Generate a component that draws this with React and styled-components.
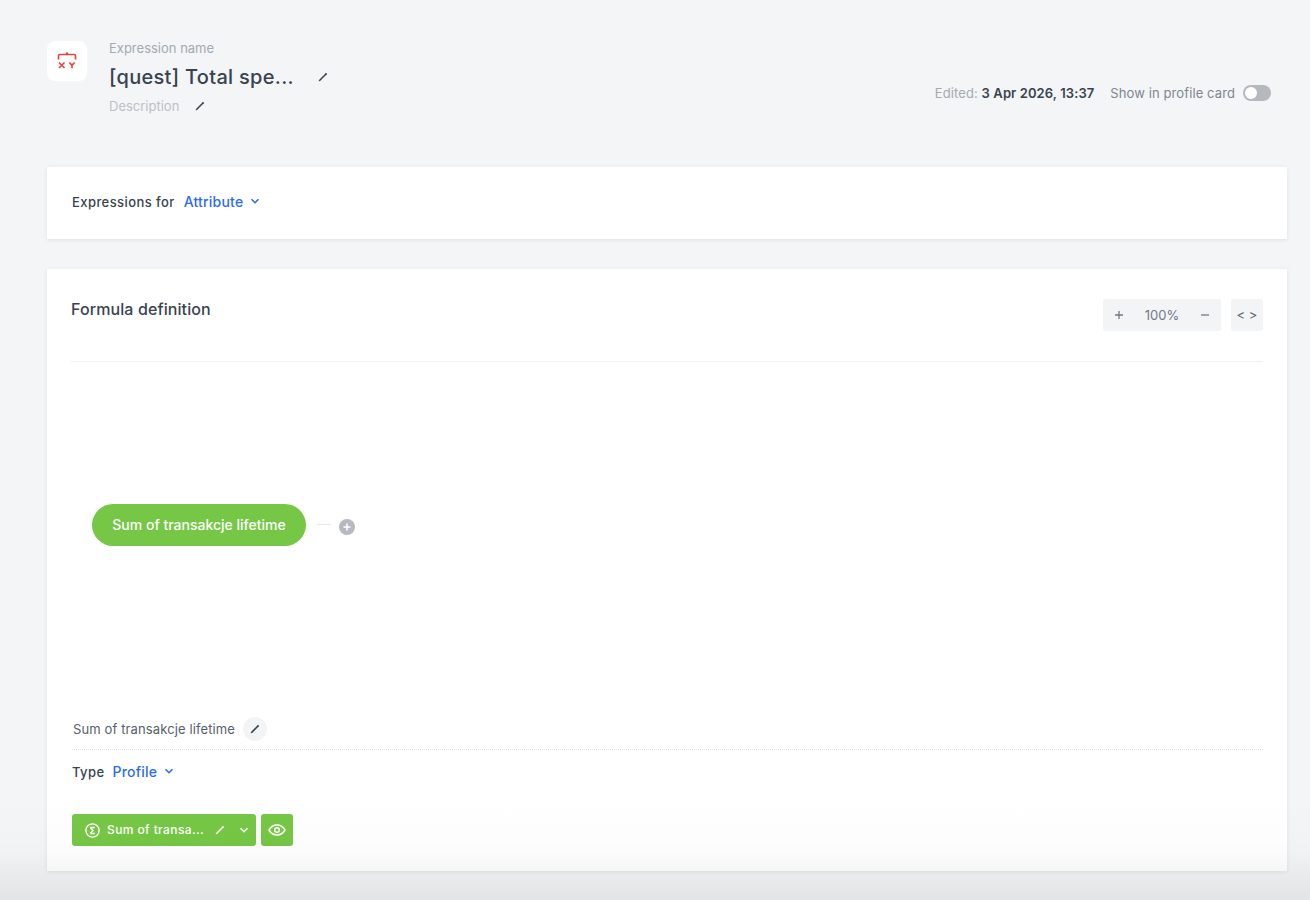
import React from 'react';
import styled, { createGlobalStyle } from 'styled-components';

const GlobalStyle = createGlobalStyle`
    html, body {
        margin: 0;
        padding: 0;
        height: 100%;
        background: #f3f5f7;
        overflow: hidden;
    }
    * {
        box-sizing: border-box;
    }
`

const Page = styled.div`
    position: relative;
    width: 1310px;
    height: 900px;
    overflow: hidden;
    padding: 41px 23px 0 47px;
    background: #f3f5f7;
    color: #384350;
    font-family: Inter, "Liberation Sans", sans-serif;
`

const BottomFade = styled.div`
    position: absolute;
    left: 0;
    right: 0;
    bottom: 0;
    height: 100px;
    pointer-events: none;
    background: linear-gradient(180deg, rgba(0,0,0,0) 0%, rgba(0,0,0,0.012) 50%, rgba(0,0,0,0.07) 100%);
`

const Header = styled.header`
    display: flex;
    justify-content: space-between;
    height: 126px;
`

const HeaderLeft = styled.div`
    display: flex;
    gap: 22px;
`

const LogoBox = styled.div`
    width: 40px;
    height: 40px;
    display: flex;
    align-items: center;
    justify-content: center;
    border-radius: 8px;
    background: #fff;
`

const NameColumn = styled.div`
    display: flex;
    flex-direction: column;
    margin-top: -1px;
`

const NameLabel = styled.div`
    font-size: 13px;
    line-height: 16px;
    color: #a3aab1;
`

const TitleRow = styled.div`
    display: flex;
    align-items: center;
    margin-top: 7px;
    height: 28px;
`

const Title = styled.div`
    width: 209px;
    font-size: 20px;
    font-weight: 500;
    line-height: 28px;
    letter-spacing: 0.3px;
    color: #384350;
`

const DescriptionRow = styled.div`
    display: flex;
    align-items: center;
    margin-top: 7px;
    height: 16px;
`

const Description = styled.div`
    width: 86px;
    font-size: 13px;
    line-height: 16px;
    color: #bcc1c6;
`

const HeaderRight = styled.div`
    display: flex;
    align-items: center;
    height: 24px;
    margin: 40px 16px 0 0;
    font-size: 13px;
    letter-spacing: 0.1px;
`

const Edited = styled.span`
    color: #a3aab1;
    margin-right: 16px;
    b {
        font-weight: 600;
        color: #384350;
    }
`

const ToggleLabel = styled.span`
    color: #7d8790;
    margin-right: 8px;
`

const Toggle = styled.div`
    width: 28px;
    height: 16px;
    padding: 2px;
    border-radius: 8px;
    background: #b5b9bd;
`

const ToggleKnob = styled.div`
    width: 12px;
    height: 12px;
    border-radius: 50%;
    background: #fff;
`

const Card = styled.section`
    background: #fff;
    box-shadow: 0 1px 4px rgba(56, 67, 80, 0.1);
`

const ForCard = styled(Card)`
    display: flex;
    align-items: center;
    height: 72px;
    padding: 0 25px 2px;
    margin-bottom: 30px;
`

const FieldLabel = styled.span`
    font-size: 13px;
    font-weight: 500;
    letter-spacing: 0.42px;
    color: #384350;
    margin-right: ${(p) => p.$gap}px;
`

const Dropdown = styled.span`
    display: inline-flex;
    align-items: center;
    gap: 7px;
    padding-bottom: 2px;
    font-size: 14px;
    font-weight: 500;
    letter-spacing: 0.2px;
    color: #2b6bf3;
`

const FormulaCard = styled(Card)`
    display: flex;
    flex-direction: column;
    height: 602px;
    padding: 0 24px 0 24px;
`

const FormulaHeader = styled.div`
    display: flex;
    justify-content: space-between;
    align-items: flex-start;
    height: 93px;
    padding-top: 30px;
    border-bottom: 1px solid #f0f1f3;
`

const FormulaTitle = styled.h2`
    margin: 0;
    font-size: 16px;
    font-weight: 500;
    line-height: 20px;
    letter-spacing: 0.1px;
    color: #384350;
`

const Controls = styled.div`
    display: flex;
    gap: 10px;
`

const ZoomGroup = styled.div`
    display: flex;
    align-items: center;
    justify-content: space-between;
    width: 118px;
    height: 32px;
    padding: 0 11px;
    border-radius: 3px;
    background: #f3f4f6;
    color: #6f7a85;
    font-size: 13px;
`

const CodeButton = styled.div`
    display: flex;
    align-items: center;
    justify-content: center;
    width: 32px;
    height: 32px;
    border-radius: 3px;
    background: #f3f4f6;
    color: #56616c;
    font-size: 13px;
`

const Canvas = styled.div`
    position: relative;
    height: 350px;
`

const Node = styled.div`
    position: absolute;
    left: 21px;
    top: 142px;
    width: 214px;
    height: 42px;
    padding-bottom: 2px;
    display: flex;
    align-items: center;
    justify-content: center;
    border-radius: 21px;
    background: #76c745;
    color: #fff;
    font-size: 14px;
    font-weight: 500;
`

const Connector = styled.div`
    position: absolute;
    left: 246px;
    top: 162px;
    width: 14px;
    height: 1px;
    background: #e5e7ea;
`

const AddNode = styled.div`
    position: absolute;
    left: 268px;
    top: 157px;
    width: 16px;
    height: 16px;
    display: flex;
    align-items: center;
    justify-content: center;
    border-radius: 50%;
    background: #b5b9c2;
`

const NameRow = styled.div`
    display: flex;
    align-items: center;
    gap: 8px;
    height: 38px;
    margin-left: 1px;
    padding: 0 0 4px 1px;
    font-size: 13px;
    letter-spacing: 0.12px;
    color: #56616c;
    border-bottom: 1px dotted #dcdfe3;
`

const RoundEdit = styled.div`
    width: 24px;
    height: 24px;
    display: flex;
    align-items: center;
    justify-content: center;
    border-radius: 50%;
    background: #f3f4f6;
`

const TypeRow = styled.div`
    display: flex;
    align-items: center;
    height: 44px;
    padding-left: 1px;
`

const ParamRow = styled.div`
    display: flex;
    gap: 5px;
    margin-top: 20px;
    padding-left: 1px;
`

const ParamButton = styled.div`
    display: flex;
    align-items: center;
    width: 184px;
    height: 32px;
    padding: 0 7px 0 13px;
    border-radius: 3px;
    background: #76c745;
    color: #fff;
    font-size: 12px;
    font-weight: 500;
    letter-spacing: 0.4px;
`

const ParamText = styled.span`
    width: 108px;
    margin: 0 0 2px 7px;
    white-space: nowrap;
`

const EyeButton = styled.div`
    width: 32px;
    height: 32px;
    display: flex;
    align-items: center;
    justify-content: center;
    border-radius: 3px;
    background: #76c745;
`

const IconSlot = styled.span`
    display: inline-flex;
    margin-left: ${(p) => p.$left || 0}px;
`

function Pencil({ color = '#384350', size = 10 }) {
    return (
        <svg width={size} height={size} viewBox="0 0 10 10" fill="none">
            <path d="M1.3 8.7 L8 2" stroke={color} strokeWidth="1.6" />
            <path d="M7.4 1.4 L8.6 2.6" stroke={color} strokeWidth="1.6" />
            <path d="M0.8 9.2 L1 8 L2 9 Z" fill={color} />
        </svg>
    )
}

function Chevron({ color, size = 10 }) {
    return (
        <svg width={size} height={size} viewBox="0 0 10 10" fill="none">
            <path d="M1.5 3.2 L5 6.7 L8.5 3.2" stroke={color} strokeWidth="1.6" />
        </svg>
    )
}

function ExpressionLogo() {
    return (
        <svg width="20" height="18" viewBox="0 0 20 18" fill="none">
            <path d="M1.5 7.5 V4 Q1.5 2.5 3 2.5 H17 Q18.5 2.5 18.5 4 V7.5" stroke="#e5483f" strokeWidth="1.7" />
            <circle cx="10" cy="1.5" r="1.2" fill="#e5483f" />
            <path d="M2 10.5 L7.5 16 M7.5 10.5 L2 16" stroke="#e5483f" strokeWidth="1.7" />
            <path d="M12.3 10.5 L15 13.2 L17.7 10.5 M15 13 V16.2" stroke="#e5483f" strokeWidth="1.7" />
        </svg>
    )
}

function SigmaCircle() {
    return (
        <svg width="15" height="15" viewBox="0 0 15 15" fill="none">
            <circle cx="7.5" cy="7.5" r="6.6" stroke="#fff" strokeWidth="1.4" />
            <path d="M5.2 4.5 H9.8 M5.2 10.5 H9.8 M5.4 4.7 L8 7.5 L5.4 10.3" stroke="#fff" strokeWidth="1.4" />
        </svg>
    )
}

function Eye() {
    return (
        <svg width="18" height="12" viewBox="0 0 18 12" fill="none">
            <path d="M1 6 C3 2.6 5.8 1 9 1 C12.2 1 15 2.6 17 6 C15 9.4 12.2 11 9 11 C5.8 11 3 9.4 1 6 Z" stroke="#fff" strokeWidth="1.5" />
            <circle cx="9" cy="6" r="2.3" stroke="#fff" strokeWidth="1.5" />
        </svg>
    )
}

function MathIcon({ minus }) {
    return (
        <svg width="10" height="10" viewBox="0 0 10 10" fill="none">
            <path d={minus ? 'M1 5 H9' : 'M1 5 H9 M5 1 V9'} stroke="#6f7a85" strokeWidth="1.3" />
        </svg>
    )
}

function App() {
    return (
        <Page>
            <GlobalStyle />
            <Header>
                <HeaderLeft>
                    <LogoBox><ExpressionLogo /></LogoBox>
                    <NameColumn>
                        <NameLabel>Expression name</NameLabel>
                        <TitleRow>
                            <Title>[quest] Total spe...</Title>
                            <Pencil />
                        </TitleRow>
                        <DescriptionRow>
                            <Description>Description</Description>
                            <Pencil />
                        </DescriptionRow>
                    </NameColumn>
                </HeaderLeft>
                <HeaderRight>
                    <Edited>Edited: <b>3 Apr 2026, 13:37</b></Edited>
                    <ToggleLabel>Show in profile card</ToggleLabel>
                    <Toggle><ToggleKnob /></Toggle>
                </HeaderRight>
            </Header>

            <ForCard>
                <FieldLabel $gap={9}>Expressions for</FieldLabel>
                <Dropdown>Attribute <Chevron color="#2b6bf3" /></Dropdown>
            </ForCard>

            <FormulaCard>
                <FormulaHeader>
                    <FormulaTitle>Formula definition</FormulaTitle>
                    <Controls>
                        <ZoomGroup>
                            <MathIcon />
                            <span>100%</span>
                            <MathIcon minus />
                        </ZoomGroup>
                        <CodeButton>&lt; &gt;</CodeButton>
                    </Controls>
                </FormulaHeader>
                <Canvas>
                    <Node>Sum of transakcje lifetime</Node>
                    <Connector />
                    <AddNode>
                        <svg width="8" height="8" viewBox="0 0 8 8" fill="none">
                            <path d="M0.5 4 H7.5 M4 0.5 V7.5" stroke="#fff" strokeWidth="1.5" />
                        </svg>
                    </AddNode>
                </Canvas>
                <NameRow>
                    Sum of transakcje lifetime
                    <RoundEdit><Pencil /></RoundEdit>
                </NameRow>
                <TypeRow>
                    <FieldLabel $gap={8}>Type</FieldLabel>
                    <Dropdown>Profile <Chevron color="#2b6bf3" /></Dropdown>
                </TypeRow>
                <ParamRow>
                    <ParamButton>
                        <SigmaCircle />
                        <ParamText>Sum of transa...</ParamText>
                        <Pencil color="#fff" />
                        <IconSlot $left={14}><Chevron color="#fff" /></IconSlot>
                    </ParamButton>
                    <EyeButton><Eye /></EyeButton>
                </ParamRow>
            </FormulaCard>
            <BottomFade />
        </Page>
    );
}

export default App;
